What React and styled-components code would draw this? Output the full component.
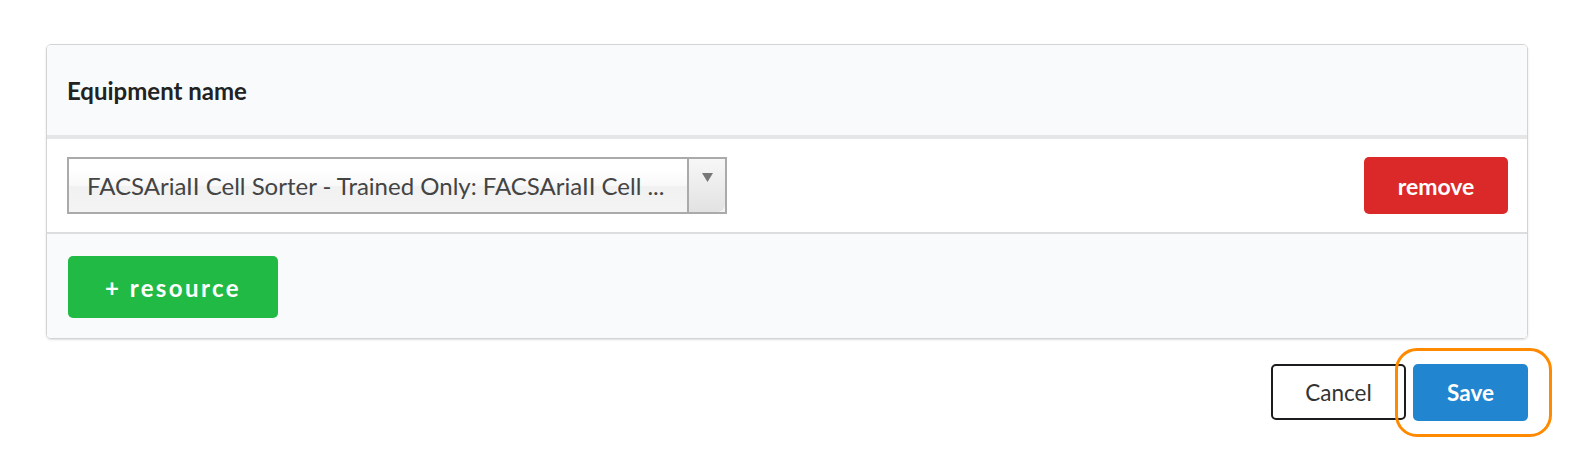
import React from 'react';
import styled, { createGlobalStyle } from 'styled-components';

const GlobalStyle = createGlobalStyle`
  body {
    margin: 0;
    background: #fff;
    font-family: Lato, "Helvetica Neue", Arial, sans-serif;
    color: rgba(0,0,0,0.87);
  }
`;

const Page = styled.main`
  min-height: 465px;
  box-sizing: border-box;
  padding: 44px 48px 0 46px;
`;

const Card = styled.section`
  border: 1px solid #d4d4d5;
  border-radius: 5px;
  box-shadow: 0 1px 2px 0 rgba(34,36,38,0.15);
  overflow: hidden;
`;

const Header = styled.div`
  height: 90px;
  display: flex;
  align-items: center;
  padding: 0 20px;
  background: #f9fafb;
  border-bottom: 4px solid #e5e6e7;
  font-size: 24px;
  font-weight: 700;
  color: #222;
`;

const Row = styled.div`
  display: flex;
  align-items: center;
  justify-content: space-between;
  padding: 18px 19px 18px 20px;
  background: #fff;
  border-bottom: 2px solid #dcddde;
`;

const Select = styled.div`
  width: 660px;
  height: 57px;
  box-sizing: border-box;
  display: flex;
  border: 2px solid #aaa;
  background: linear-gradient(#fff 20%, #f8f8f8 50%, #f1f1f1 52%, #f4f4f4 100%);
  font-size: 24px;
  color: #444;
`;

const SelectText = styled.span`
  flex: 1;
  padding-left: 18px;
  display: flex;
  align-items: center;
  white-space: nowrap;
  overflow: hidden;
`;

const Arrow = styled.div`
  width: 38px;
  border-left: 2px solid #aaa;
  border-bottom-right-radius: 8px;
  background: linear-gradient(#f7f7f7, #e2e2e2);
  display: flex;
  justify-content: center;
  padding-top: 14px;
  box-sizing: border-box;
`;

const Btn = styled.button`
  border: none;
  border-radius: 5px;
  padding: 0;
  font-family: Lato, "Helvetica Neue", Arial, sans-serif;
  font-weight: 700;
  color: #fff;
  cursor: pointer;
  background: ${p => p.bg};
`;

const RemoveBtn = styled(Btn)`
  width: 144px;
  height: 57px;
  font-size: 23px;
`;

const Footer = styled.div`
  padding: 22px 22px 20px 21px;
  background: #f9fafb;
`;

const AddBtn = styled(Btn)`
  width: 210px;
  height: 62px;
  font-size: 24px;
  letter-spacing: 2.4px;
`;

const Actions = styled.div`
  display: flex;
  justify-content: flex-end;
  align-items: flex-start;
  gap: 7px;
  margin-top: 25px;
`;

const CancelBtn = styled.button`
  width: 135px;
  height: 56px;
  padding: 0;
  background: #fff;
  border: 2px solid #1b1c1d;
  border-radius: 5px;
  font-family: Lato, "Helvetica Neue", Arial, sans-serif;
  font-size: 22.5px;
  color: #333;
  cursor: pointer;
`;

const SaveWrap = styled.div`
  position: relative;
  display: flex;
`;

const SaveBtn = styled(Btn)`
  width: 115px;
  height: 57px;
  font-size: 22.5px;
`;

const Ring = styled.span`
  position: absolute;
  top: -16px;
  bottom: -16px;
  left: -18px;
  right: -24px;
  border: 3px solid #ff8a00;
  border-radius: 22px;
  pointer-events: none;
`;

export default function App() {
  return (
    <>
      <GlobalStyle />
      <Page>
        <Card>
          <Header>Equipment name</Header>
          <Row>
            <Select>
              <SelectText>FACSAriaII Cell Sorter - Trained Only: FACSAriaII Cell ...</SelectText>
              <Arrow>
                <svg width="11" height="9" viewBox="0 0 11 9">
                  <path d="M0 0 H11 L5.5 9 Z" fill="#777" />
                </svg>
              </Arrow>
            </Select>
            <RemoveBtn bg="#db2828">remove</RemoveBtn>
          </Row>
          <Footer>
            <AddBtn bg="#21ba45">+ resource</AddBtn>
          </Footer>
        </Card>
        <Actions>
          <CancelBtn>Cancel</CancelBtn>
          <SaveWrap>
            <SaveBtn bg="#2185d0">Save</SaveBtn>
            <Ring />
          </SaveWrap>
        </Actions>
      </Page>
    </>
  );
}
